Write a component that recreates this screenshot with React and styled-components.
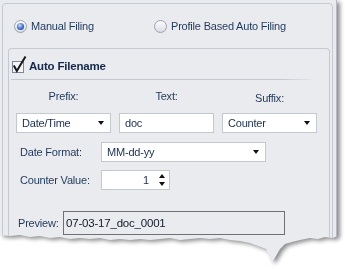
import styled, { createGlobalStyle } from "styled-components";

const GlobalStyle = createGlobalStyle`
  html, body {
    margin: 0;
    padding: 0;
    background: #fff;
  }
  body {
    font-family: "Liberation Sans", Arial, sans-serif;
    font-size: 11px;
    letter-spacing: -0.2px;
    color: #1e395b;
  }
`;

const tear = `polygon(
  0 0, 337px 0, 337px 236px, 333px 238px, 325px 237px, 318px 239px, 310px 238px,
  300px 240px, 292px 242px, 285px 244px, 280px 249px, 276px 256px, 272px 262px,
  269px 255px, 266px 249px, 258px 246px, 250px 243px, 240px 241px, 230px 240px,
  220px 238px, 210px 239px, 200px 238px, 190px 239px, 180px 240px, 170px 238px,
  160px 239px, 150px 240px, 140px 239px, 130px 240px, 120px 239px, 110px 240px,
  100px 238px, 90px 239px, 80px 238px, 70px 239px, 60px 237px, 50px 238px,
  40px 236px, 30px 237px, 20px 235px, 10px 236px, 0 235px
)`;

const Page = styled.div`
  width: 345px;
  height: 269px;
  overflow: hidden;
  filter: drop-shadow(3px 2px 2px rgba(0, 0, 0, 0.45));
`;

const Sheet = styled.div`
  width: 337px;
  height: 265px;
  box-sizing: border-box;
  background: #eaebef;
  border-right: 1px solid #b4b8bf;
  padding: 3px 3px 0 2px;
  clip-path: ${tear};
`;

const FilingGroup = styled.div`
  height: 300px;
  border: 1px solid #c5c9d0;
  border-radius: 4px;
  padding: 0 2px 0 5px;
  display: flex;
  flex-direction: column;
`;

const RadioRow = styled.div`
  height: 44px;
  display: flex;
  align-items: center;
  padding-left: 6px;
`;

const RadioOption = styled.label`
  display: flex;
  align-items: center;
  gap: 4px;
  width: ${(p) => p.$width || "auto"};
  white-space: nowrap;
`;

const NameGroup = styled.div`
  flex: 1;
  border: 1px solid #c5c9d0;
  border-bottom: none;
  border-radius: 4px 4px 0 0;
  padding: 0 0 0 2px;
`;

const Header = styled.div`
  height: 30px;
  display: flex;
  align-items: flex-end;
  gap: 2px;
  padding-bottom: 5px;
  box-sizing: border-box;
`;

const HeaderTitle = styled.span`
  font-weight: bold;
  font-size: 11.5px;
  color: #14284a;
  padding-bottom: 2px;
`;

const Divider = styled.div`
  height: 1px;
  margin: 0 12px 0 0;
  background: linear-gradient(to right, #c3c7ce 88%, rgba(195, 199, 206, 0));
`;

const Body = styled.div`
  padding-left: 5px;
`;

const Columns = styled.div`
  display: grid;
  grid-template-columns: 95px 95px 95px;
  column-gap: 8px;
`;

const ColumnLabel = styled.div`
  text-align: center;
  height: 14px;
  line-height: 14px;
  margin-top: ${(p) => p.$offset || 0}px;
`;

const LabelRow = styled(Columns)`
  margin-top: 9px;
  height: 24px;
`;

const Field = styled.div`
  position: relative;
  height: ${(p) => p.$height || 20}px;
  width: ${(p) => (p.$width ? `${p.$width}px` : "auto")};
  box-sizing: border-box;
  background: #fff;
  border: 1px solid #c4c8cf;
  display: flex;
  align-items: center;
  padding: 0 4px 0 5px;
  color: #1a2f52;
  justify-content: ${(p) => (p.$right ? "flex-end" : "flex-start")};
`;

const Arrow = styled.span`
  position: absolute;
  right: 6px;
  top: 50%;
  margin-top: -2px;
  width: 0;
  height: 0;
  border-left: 3.5px solid transparent;
  border-right: 3.5px solid transparent;
  border-top: 4px solid #111;
`;

const SpinButtons = styled.span`
  position: absolute;
  right: 4px;
  top: 2px;
  bottom: 2px;
  display: flex;
  flex-direction: column;
  justify-content: space-between;
  padding: 1px 0;
`;

const SpinArrow = styled.span`
  width: 0;
  height: 0;
  border-left: 3.5px solid transparent;
  border-right: 3.5px solid transparent;
  ${(p) =>
    p.$up ? "border-bottom: 4px solid #111;" : "border-top: 4px solid #111;"}
`;

const SpinValue = styled.span`
  margin-right: 16px;
`;

const FormRow = styled.div`
  display: flex;
  align-items: center;
  margin-top: ${(p) => p.$top}px;
`;

const RowLabel = styled.span`
  width: ${(p) => p.$width}px;
  padding-left: ${(p) => p.$indent}px;
  box-sizing: border-box;
  white-space: nowrap;
`;

const PreviewBox = styled.div`
  width: 222px;
  height: 24px;
  box-sizing: border-box;
  border: 1px solid #6e7075;
  display: flex;
  align-items: center;
  padding-left: 2px;
  color: #121a2a;
  font-size: 11.5px;
`;

const Radio = ({ checked }) => (
  <svg width="13" height="13" viewBox="0 0 13 13">
    <defs>
      <linearGradient id={checked ? "ringOn" : "ringOff"} x1="0" y1="0" x2="0" y2="1">
        <stop offset="0" stopColor="#ffffff" />
        <stop offset="1" stopColor="#d7dbe2" />
      </linearGradient>
      <radialGradient id="dot" cx="0.4" cy="0.35" r="0.7">
        <stop offset="0" stopColor="#d6e4ff" />
        <stop offset="0.5" stopColor="#5a88de" />
        <stop offset="1" stopColor="#2b4ea3" />
      </radialGradient>
    </defs>
    <circle
      cx="6.5"
      cy="6.5"
      r="6"
      fill={`url(#${checked ? "ringOn" : "ringOff"})`}
      stroke="#9aa2ae"
    />
    {checked && <circle cx="6.5" cy="6.5" r="3.6" fill="url(#dot)" />}
  </svg>
);

const CheckMark = () => (
  <svg width="16" height="20" viewBox="0 0 16 20">
    <rect x="1.5" y="7.5" width="11" height="11" fill="#f3f4f7" stroke="#7f8794" />
    <path
      d="M2.8 11.5 L5.8 17 L14.5 2.5"
      fill="none"
      stroke="#16181d"
      strokeWidth="2"
      strokeLinejoin="miter"
    />
  </svg>
);

const App = () => {
  return (
    <Page>
      <GlobalStyle />
      <Sheet>
        <FilingGroup>
          <RadioRow>
            <RadioOption $width="140px">
              <Radio checked />
              Manual Filing
            </RadioOption>
            <RadioOption>
              <Radio />
              Profile Based Auto Filing
            </RadioOption>
          </RadioRow>
          <NameGroup>
            <Header>
              <CheckMark />
              <HeaderTitle>Auto Filename</HeaderTitle>
            </Header>
            <Divider />
            <Body>
              <LabelRow>
                <ColumnLabel>Prefix:</ColumnLabel>
                <ColumnLabel>Text:</ColumnLabel>
                <ColumnLabel $offset={2}>Suffix:</ColumnLabel>
              </LabelRow>
              <Columns>
                <Field>
                  Date/Time
                  <Arrow />
                </Field>
                <Field>doc</Field>
                <Field>
                  Counter
                  <Arrow />
                </Field>
              </Columns>
              <FormRow $top={9}>
                <RowLabel $width={85} $indent={4}>
                  Date Format:
                </RowLabel>
                <Field $width={165}>
                  MM-dd-yy
                  <Arrow />
                </Field>
              </FormRow>
              <FormRow $top={8}>
                <RowLabel $width={85} $indent={4}>
                  Counter Value:
                </RowLabel>
                <Field $width={69} $right>
                  <SpinValue>1</SpinValue>
                  <SpinButtons>
                    <SpinArrow $up />
                    <SpinArrow />
                  </SpinButtons>
                </Field>
              </FormRow>
              <FormRow $top={21}>
                <RowLabel $width={47} $indent={2}>
                  Preview:
                </RowLabel>
                <PreviewBox>07-03-17_doc_0001</PreviewBox>
              </FormRow>
            </Body>
          </NameGroup>
        </FilingGroup>
      </Sheet>
    </Page>
  );
};

export default App;
